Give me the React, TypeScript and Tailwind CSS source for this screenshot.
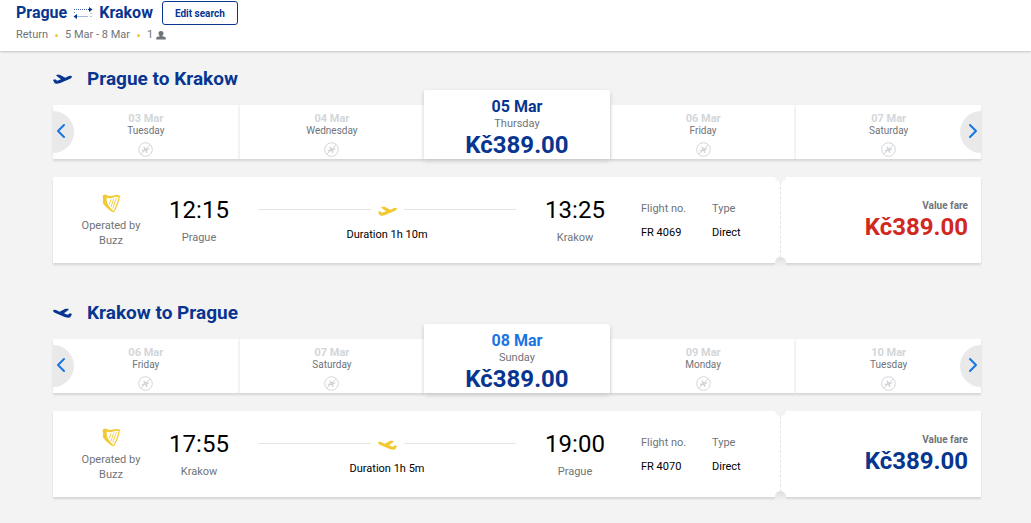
import { ChevronLeft, ChevronRight } from "lucide-react";

type Day = { date: string; weekday: string; price?: string };
type Flight = {
  from: string;
  to: string;
  depart: string;
  arrive: string;
  duration: string;
  number: string;
  price: string;
  inbound: boolean;
  days: Day[];
};

const flights: Flight[] = [
  {
    from: "Prague",
    to: "Krakow",
    depart: "12:15",
    arrive: "13:25",
    duration: "1h 10m",
    number: "FR 4069",
    price: "Kč389.00",
    inbound: false,
    days: [
      { date: "03 Mar", weekday: "Tuesday" },
      { date: "04 Mar", weekday: "Wednesday" },
      { date: "05 Mar", weekday: "Thursday", price: "Kč389.00" },
      { date: "06 Mar", weekday: "Friday" },
      { date: "07 Mar", weekday: "Saturday" },
    ],
  },
  {
    from: "Krakow",
    to: "Prague",
    depart: "17:55",
    arrive: "19:00",
    duration: "1h 5m",
    number: "FR 4070",
    price: "Kč389.00",
    inbound: true,
    days: [
      { date: "06 Mar", weekday: "Friday" },
      { date: "07 Mar", weekday: "Saturday" },
      { date: "08 Mar", weekday: "Sunday", price: "Kč389.00" },
      { date: "09 Mar", weekday: "Monday" },
      { date: "10 Mar", weekday: "Tuesday" },
    ],
  },
];

function Plane({ inbound, className }: { inbound: boolean; className: string }) {
  return (
    <svg viewBox="0 0 57 30" className={`h-[10px] w-[19px] shrink-0 ${className}`} fill="currentColor" aria-hidden="true">
      <path
        transform={inbound ? "translate(57 0) scale(-1 1)" : undefined}
        d="M0 18 L6 16 L13 20 L24 16 L10 5 L11 2 L20 2 L37 11 L48 6 Q56 4 57 8 Q56 13 48 16 L22 27 Q10 31 5 28 Z"
      />
    </svg>
  );
}

function SwapArrows() {
  return (
    <svg viewBox="0 0 20 14" className="h-[14px] w-5" fill="none" stroke="#073590" aria-hidden="true">
      <path d="M1 3.5H15" strokeDasharray="1 1" opacity=".75" />
      <path d="M15 3.5H18" />
      <path d="M16 1L19.5 3.5L16 6Z" fill="#073590" stroke="none" />
      <path d="M3 10.5H15" opacity=".35" />
      <path d="M17.5 10.5H18.5M17.5 7.5H18.5M1 6.5H2" opacity=".6" />
      <path d="M4 8L.5 10.5L4 13Z" fill="#073590" stroke="none" />
    </svg>
  );
}

function Passenger() {
  return (
    <svg viewBox="0 0 10 9" className="h-[9px] w-[10px]" fill="#6f7479" aria-hidden="true">
      <path d="M5 0C3.2 0 2.4 1 2.5 2.5C2.6 3.7 3.2 4.4 3.7 4.8V5.2L1.5 5.8C.4 6.1.2 7 .2 8V8.6H9.8V8C9.8 7 9.6 6.1 8.5 5.8L6.3 5.2V4.8C6.8 4.4 7.4 3.7 7.5 2.5C7.6 1 6.8 0 5 0Z" />
    </svg>
  );
}

function NoFlight() {
  return (
    <svg viewBox="0 0 15 15" className="size-[15px]" fill="none" stroke="#d3d6d9" aria-hidden="true">
      <circle cx="7.5" cy="7.5" r="6.8" />
      <path d="M2.8 12.2L12.2 2.8" />
      <path d="M3.5 8L6.2 7.5L5.3 4.7L6.3 4.5L8.3 6.8L11.2 6.2Q12 6.8 11 7.6L9.2 8.2L9.4 11L8.4 11.2L7 8.8L4.3 9.4Z" fill="#d3d6d9" stroke="none" />
    </svg>
  );
}

function Harp() {
  return (
    <svg viewBox="0 0 19 19" className="h-[19px] w-[19px]" fill="none" stroke="#f1c933" aria-hidden="true">
      <path
        d="M1 1.2Q3.2 0 5 1.2Q8 2.6 11.5 1.5Q15 .6 18.8 1.8Q18.4 2.9 16.6 2.9Q13 2.6 10.5 3.8Q7.2 5 4.8 3.6Q4.4 6 5 8.4Q6.6 12.6 11.8 17.4L11.4 18.6Q4.4 14.6 1 9.2Q.4 8.2 1.2 7.4Q.2 6.2 1.2 5Q.2 3.2 1 1.2Z"
        fill="#f1c933"
        stroke="none"
      />
      <path d="M17.2 2.9Q16.2 9.8 11.7 17.8" strokeWidth="1.2" />
      <path d="M9.2 5.4L7.2 10.4M11.8 4.6L9 13M14.4 4.2L10.8 14.6" strokeWidth=".9" />
    </svg>
  );
}

function DayCell({ day, inbound }: { day: Day; inbound: boolean }) {
  if (day.price) {
    return (
      <button
        aria-pressed="true"
        className="relative z-10 flex h-[69px] flex-col items-center rounded-t-xs bg-white pt-2 shadow-[0_2px_4px_rgba(0,0,0,0.2)]"
      >
        <span className={`text-base leading-[18px] font-bold ${inbound ? "text-[#1a74e2]" : "text-[#073590]"}`}>{day.date}</span>
        <span className="text-[11px] leading-4 text-[#6f7479]">{day.weekday}</span>
        <span className="text-2xl leading-[27px] font-bold text-[#073590]">{day.price}</span>
      </button>
    );
  }
  return (
    <button
      disabled
      className="flex h-[54px] flex-col items-center border-l border-[#f1f1f1] bg-white pt-2 shadow-[0_2px_2px_rgba(0,0,0,0.12)] first:border-l-0"
    >
      <span className="text-[11px] leading-3 font-bold text-[#d3d6d9]">{day.date}</span>
      <span className="text-[10px] leading-3 text-[#6f7479]">{day.weekday}</span>
      <span className="mt-[5px]">
        <NoFlight />
      </span>
    </button>
  );
}

function Stop({ time, city }: { time: string; city: string }) {
  return (
    <div className="w-[60px] shrink-0 pt-[17px] text-center">
      <p className="text-2xl leading-8 text-black">{time}</p>
      <p className="mt-1 leading-4">{city}</p>
    </div>
  );
}

function Detail({ label, value }: { label: string; value: string }) {
  return (
    <div className="w-[71px] shrink-0 pt-6 leading-4">
      <dt>{label}</dt>
      <dd className="mt-2 text-black">{value}</dd>
    </div>
  );
}

function FlightSection({ flight }: { flight: Flight }) {
  return (
    <section>
      <h2 className="flex h-[23px] items-center gap-[15px] text-[19px] leading-[23px] font-bold text-[#073590]">
        <Plane inbound={flight.inbound} className="text-[#073590]" />
        {flight.from} to {flight.to}
      </h2>
      <div className="relative grid grid-cols-5 items-end">
        {flight.days.map((day) => (
          <DayCell key={day.date} day={day} inbound={flight.inbound} />
        ))}
        <button
          aria-label="Earlier dates"
          className="absolute bottom-[6px] left-0 flex h-[42px] w-[21px] items-center overflow-hidden rounded-r-full bg-[#e9e9e9] pb-[3px]"
        >
          <ChevronLeft strokeWidth={2} className="-ml-1 size-6 shrink-0 text-[#1a74e2]" />
        </button>
        <button
          aria-label="Later dates"
          className="absolute right-0 bottom-[6px] flex h-[42px] w-[21px] items-center justify-end overflow-hidden rounded-l-full bg-[#e9e9e9] pb-[3px]"
        >
          <ChevronRight strokeWidth={2} className="-mr-1 size-6 shrink-0 text-[#1a74e2]" />
        </button>
      </div>
      <article className="relative mt-[18px] flex h-[86px] bg-white text-[11px] text-[#6f7479] shadow-[0_2px_2px_rgba(0,0,0,0.12)]">
        <div className="flex w-[116px] shrink-0 flex-col items-center pt-[17px] text-center">
          <Harp />
          <p className="mt-[5px] w-[70px] leading-[15px]">Operated by Buzz</p>
        </div>
        <Stop time={flight.depart} city={flight.from} />
        <div className="mx-[29px] min-w-0 flex-1 pt-[26px]">
          <div className="flex h-3 items-center gap-[7px]">
            <span className="h-px flex-1 bg-[#e4e4e4]" />
            <Plane inbound={flight.inbound} className="mt-[3px] text-[#f1c933]" />
            <span className="h-px flex-1 bg-[#e4e4e4]" />
          </div>
          <p className="mt-3 text-center leading-4 text-black">Duration {flight.duration}</p>
        </div>
        <Stop time={flight.arrive} city={flight.to} />
        <dl className="ml-9 flex w-[139px] shrink-0">
          <Detail label="Flight no." value={flight.number} />
          <Detail label="Type" value="Direct" />
        </dl>
        <div className="relative w-[201px] shrink-0 border-l border-dashed border-[#e4e4e4] pt-[22px] pr-[13px] text-right">
          <span className="absolute -top-px -left-[6px] h-[6px] w-[11px] rounded-b-full bg-[#f3f3f3]" />
          <span className="absolute -bottom-[4px] -left-[6px] h-[10px] w-[11px] rounded-t-full bg-linear-to-b from-[#dedede] to-[#f3f3f3]" />
          <p className="text-[10px] leading-[13px] font-bold">Value fare</p>
          <p className={`text-2xl leading-[30px] font-bold ${flight.inbound ? "text-[#073590]" : "text-[#d0291f]"}`}>{flight.price}</p>
        </div>
      </article>
    </section>
  );
}

export default function App() {
  return (
    <div className="min-h-screen bg-[#f3f3f3] font-['Roboto',sans-serif]">
      <header className="h-[51px] bg-white pl-4 shadow-[0_1px_2px_rgba(0,0,0,0.2)]">
        <div className="flex h-[26px] items-center">
          <h1 className="flex items-center gap-[6px] text-base leading-6 font-bold text-[#073590]">
            Prague
            <SwapArrows />
            Krakow
          </h1>
          <button className="ml-[9px] h-6 w-[76px] rounded-[3px] border border-[#073590] text-[10px] font-bold text-[#073590]">Edit search</button>
        </div>
        <p className="flex items-center gap-[7px] text-[11px] leading-[18px] text-[#6f7479]">
          <span>Return</span>
          <span className="size-[3px] rounded-full bg-[#f1c933]" />
          <span>5 Mar - 8 Mar</span>
          <span className="size-[3px] rounded-full bg-[#f1c933]" />
          <span className="flex items-center gap-[3px]">
            1 <Passenger />
          </span>
        </p>
      </header>
      <main className="flex flex-col gap-[38px] pt-4 pr-[50px] pl-[53px]">
        {flights.map((flight) => (
          <FlightSection key={flight.number} flight={flight} />
        ))}
      </main>
    </div>
  );
}
